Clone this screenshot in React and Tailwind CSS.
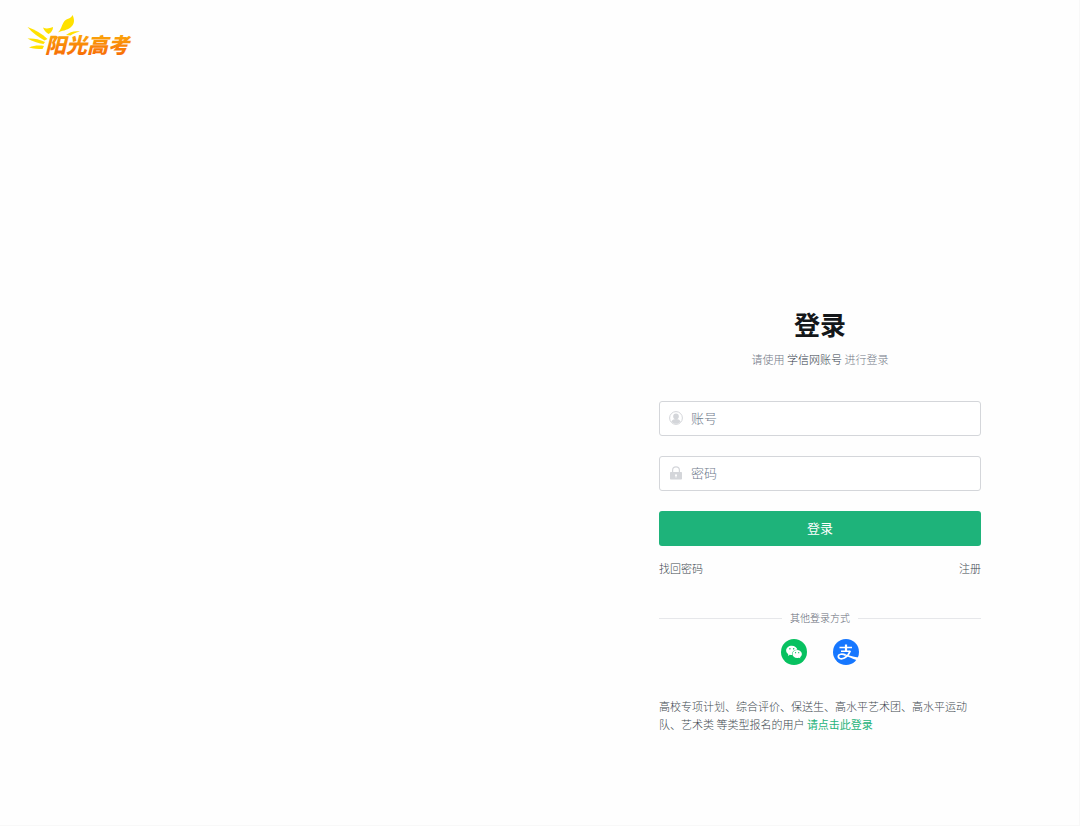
import { useState } from 'react'
import { AiFillWechat } from 'react-icons/ai'

function Logo() {
  return (
    <a href="#" aria-label="阳光高考" className="block w-[110px]">
      <svg viewBox="0 0 110 46" className="block w-full">
        <defs>
          <linearGradient id="logoText" x1="0" y1="0" x2="0" y2="1">
            <stop offset="0.2" stopColor="#fba50a" />
            <stop offset="0.9" stopColor="#f76a06" />
          </linearGradient>
        </defs>
        <g fill="#ffe100">
          <path d="M32 18.500C35 15.500 35.500 12 37.500 8.500C40 4 44.500 5.500 46.500 1C49 6 48.500 10.500 44.500 13.500C41 16.500 36 16.500 32 18.500Z" />
          <path d="M17 13.500C20 15 23.500 14.500 27 13C27 16 25.500 18.500 22.500 20C20 18.500 18 16.500 17 13.500Z" />
          <path d="M1.500 13C9 15.500 16 19.500 21.500 25L18.500 26.500C12.500 23 6.500 19 1.500 13Z" />
          <path d="M1.500 24.500C7 24 13 25 19 28L17.500 30C12 29 6.500 27.500 1.500 24.500Z" />
          <path d="M3 33.500C8 31.500 13 31 18 32L16.500 35C12 35 7 35 3 33.500Z" />
          <path d="M40 21C44 18 48 16.500 54 17.500C50 18.500 47 19.500 44.500 21.500Z" />
        </g>
        <text
          x="19"
          y="39"
          fill="url(#logoText)"
          className="font-['Noto_Sans_CJK_SC',sans-serif] text-[21px] font-black italic"
        >
          阳光高考
        </text>
      </svg>
    </a>
  )
}

function UserIcon() {
  return (
    <svg viewBox="0 0 14 14" className="h-3.5 w-3.5 shrink-0">
      <circle cx="7" cy="7" r="6.400" fill="none" stroke="#d4d6da" />
      <circle cx="7" cy="5.400" r="2.800" fill="#d4d6da" />
      <path d="M2.400 10.400C3.600 8.800 5 8 7 8s3.400.8 4.600 2.400C10.500 12 8.800 12.800 7 12.800s-3.500-.8-4.600-2.400Z" fill="#d4d6da" />
    </svg>
  )
}

function LockIcon() {
  return (
    <svg viewBox="0 0 14 14" className="h-3.5 w-3.5 shrink-0">
      <path d="M3.600 6.500V4.200a3.400 3.400 0 0 1 6.800 0v2.300" fill="none" stroke="#d4d6da" strokeWidth="1.200" />
      <path
        fillRule="evenodd"
        d="M1.800 6h10.400a.8.800 0 0 1 .8.800v5.900a.8.800 0 0 1-.8.800H1.800a.8.800 0 0 1-.8-.8V6.800a.8.800 0 0 1 .8-.8Zm5.200 2.200a1 1 0 0 0-.5 1.900v1.400h1v-1.400A1 1 0 0 0 7 8.200Z"
        fill="#d4d6da"
      />
    </svg>
  )
}

function AlipayIcon() {
  return (
    <svg viewBox="0 0 26 26" className="h-[26px] w-[26px]">
      <circle cx="13" cy="13" r="13" fill="#1677ff" />
      <g fill="none" stroke="#fff">
        <path d="M6.500 8.600h12.500M8 12.200h9.400" strokeWidth="1.500" />
        <path d="M13 5.500v6.500" strokeWidth="2.200" />
        <path d="M17.200 12C16 15.200 13.800 17.800 11.300 19.100c-2.300 1.200-6 1-6-1.500 0-2.700 4-3 7-1.700" strokeWidth="1.700" />
      </g>
      <path d="M10.500 14.800C15 16 19 17.500 25.500 18.600c-.4 1-.8 1.800-1.400 2.600C19 19.600 15 17.400 10.500 16Z" fill="#fff" />
    </svg>
  )
}

function Field({ icon, label, ...props }) {
  return (
    <label className="flex h-[35px] items-center gap-2 rounded-[3px] border border-[#d4d6da] bg-white px-[9px] pb-px focus-within:border-[#1eb37a]">
      {icon}
      <input
        aria-label={label}
        placeholder={label}
        className="min-w-0 flex-1 text-[13px] text-[#333] outline-none placeholder:text-[#6f7b8c]"
        {...props}
      />
    </label>
  )
}

export default function App() {
  const [account, setAccount] = useState('')
  const [password, setPassword] = useState('')

  return (
    <div className="flex min-h-screen flex-col border-r border-b border-[#f8f8f8] bg-[#fefefe] font-['Noto_Sans_CJK_SC',sans-serif] text-[11px] leading-[18px] font-light text-[#40494f]">
      <header className="px-[26px] pt-3.5">
        <Logo />
      </header>

      <main className="flex flex-1 justify-end">
        <div className="flex w-full max-w-[518px] justify-center px-6 pt-[244px] pb-20">
          <div className="w-full max-w-[322px]">
            <h1 className="text-center text-[26px] leading-10 font-bold text-[#14171a]">登录</h1>
            <p className="mt-1.5 text-center text-[#737987]">
              请使用 <span className="text-[#333c49]">学信网账号</span> 进行登录
            </p>

            <form className="mt-[33px] flex flex-col gap-5" onSubmit={(e) => e.preventDefault()}>
              <Field
                icon={<UserIcon />}
                label="账号"
                value={account}
                onChange={(e) => setAccount(e.target.value)}
              />
              <Field
                icon={<LockIcon />}
                label="密码"
                type="password"
                value={password}
                onChange={(e) => setPassword(e.target.value)}
              />
              <button
                type="submit"
                className="h-[35px] cursor-pointer rounded-[3px] bg-[#1eb37a] pb-0.5 text-[13px] font-normal text-white hover:bg-[#1aa26e]"
              >
                登录
              </button>
            </form>

            <div className="mt-[13px] flex justify-between">
              <a href="#" className="hover:text-[#1eb37a]">找回密码</a>
              <a href="#" className="hover:text-[#1eb37a]">注册</a>
            </div>

            <div className="mt-8 flex items-center gap-2 text-[10px] text-[#666c78]">
              <span className="h-px flex-1 bg-[#e6e7ea]" />
              其他登录方式
              <span className="h-px flex-1 bg-[#e6e7ea]" />
            </div>

            <div className="mt-3 flex justify-center gap-[26px]">
              <button
                type="button"
                aria-label="微信登录"
                className="flex h-[26px] w-[26px] cursor-pointer items-center justify-center rounded-full bg-[#07c160] text-white"
              >
                <AiFillWechat className="h-[18px] w-[18px]" />
              </button>
              <button type="button" aria-label="支付宝登录" className="cursor-pointer rounded-full">
                <AlipayIcon />
              </button>
            </div>

            <p className="mt-8">
              高校专项计划、综合评价、保送生、高水平艺术团、高水平运动队、艺术类 等类型报名的用户{' '}
              <a href="#" className="font-normal text-[#1eb37a] hover:underline">请点击此登录</a>
            </p>
          </div>
        </div>
      </main>
    </div>
  )
}
